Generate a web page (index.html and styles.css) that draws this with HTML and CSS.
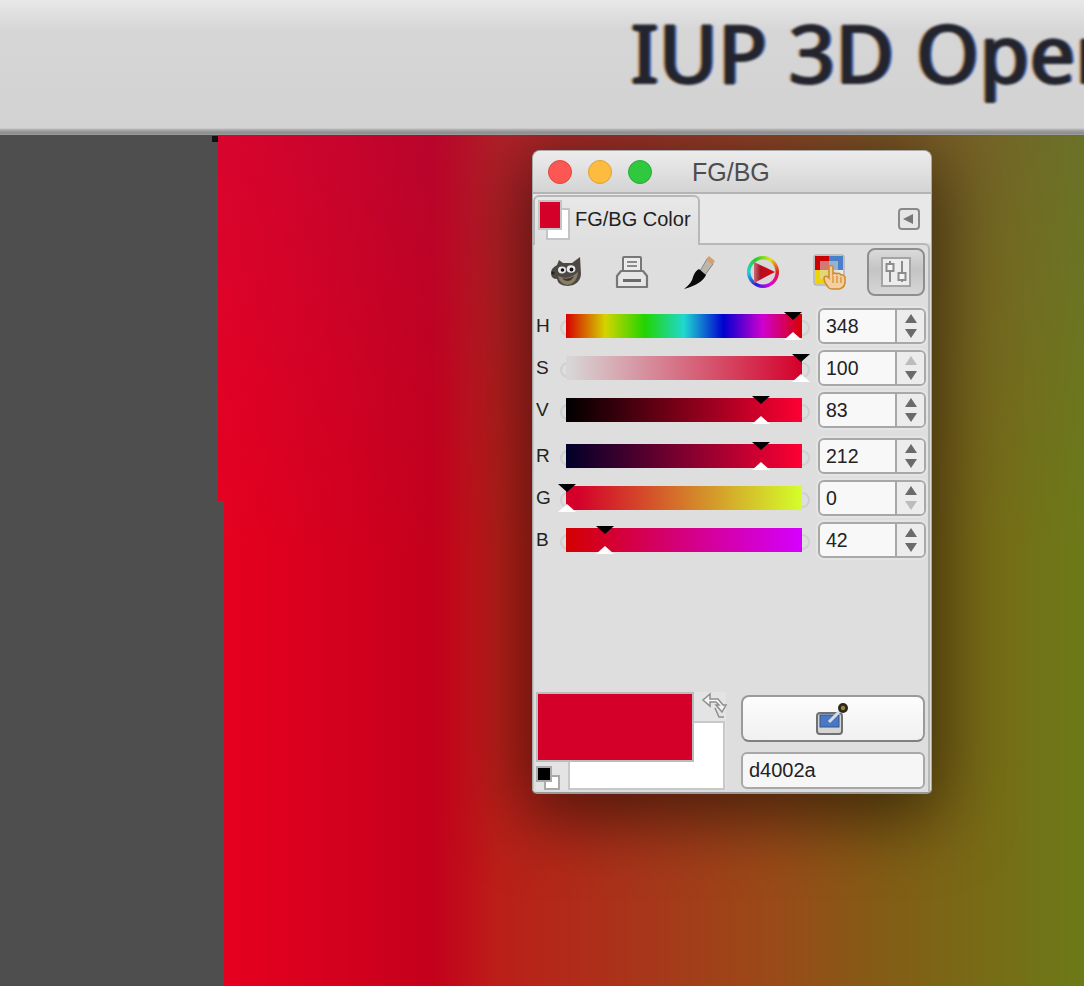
FILE: index.html
```html
<!DOCTYPE html>
<html>
<head>
    <title>IUP 3D OpenGL</title>
    <link rel="stylesheet" href="styles.css">
</head>
<body>
    <div class="topbar">
        <h1 class="app-title">IUP 3D OpenGL</h1>
    </div>

    <div class="workspace">
        <div class="gutter">
            <div class="gutter-top"><span class="corner-dot"></span></div>
            <div class="gutter-bottom"></div>
        </div>

        <div class="window">
            <div class="titlebar">
                <span class="light light-close"></span>
                <span class="light light-min"></span>
                <span class="light light-max"></span>
                <span class="window-title">FG/BG</span>
            </div>

            <div class="tabbar">
                <div class="tab">
                    <span class="tab-swatch"><span class="tab-bg"></span><span class="tab-fg"></span></span>
                    <span class="tab-label">FG/BG Color</span>
                </div>
                <div class="tab-menu">
                    <svg width="22" height="22" viewBox="0 0 22 22">
                        <rect x="1" y="1" width="20" height="20" rx="3" fill="#e6e6e6" stroke="#8a8a8a" stroke-width="2"/>
                        <path d="M5 11 L15 6 V16 Z" fill="#777"/>
                    </svg>
                </div>
            </div>

            <div class="panel">
                <div class="toolbar">
                    <div class="tool">
                        <svg width="36" height="36" viewBox="0 0 36 36">
                            <path d="M9 11 L11 6 L15 9 H24 L32 3 L33 20 Q32 31 20 32 Q10 32 9 25 Q3 25 3 19 Q3 14 9 11 Z" fill="#4c4944"/>
                            <path d="M10 22 Q20 27 30 18 Q29 30 19 31 Q12 30 10 22 Z" fill="#8a7d66"/>
                            <path d="M14 24 Q20 26 26 22 Q24 27 19 27 Q16 27 14 24 Z" fill="#3c3832"/>
                            <ellipse cx="14" cy="16" rx="4" ry="3.4" fill="#e8e8e8"/>
                            <ellipse cx="23" cy="15" rx="4.4" ry="3.8" fill="#e8e8e8"/>
                            <circle cx="14.5" cy="16" r="1.8" fill="#111"/>
                            <circle cx="23.5" cy="15.5" r="1.9" fill="#111"/>
                            <circle cx="5" cy="19" r="1.6" fill="#222"/>
                        </svg>
                    </div>
                    <div class="tool">
                        <svg width="36" height="36" viewBox="0 0 36 36">
                            <rect x="9" y="3" width="18" height="16" rx="1" fill="#ececec" stroke="#777" stroke-width="2"/>
                            <path d="M13 8 H23 M13 12 H23" stroke="#8c8c8c" stroke-width="2"/>
                            <path d="M7 17 H29 L33 22 V33 H3 V22 Z" fill="#e6e6e6" stroke="#777" stroke-width="2.2" stroke-linejoin="round"/>
                            <path d="M9 26.5 H27" stroke="#6a6a6a" stroke-width="3"/>
                        </svg>
                    </div>
                    <div class="tool">
                        <svg width="36" height="36" viewBox="0 0 36 36">
                            <path d="M20 17 L27 5 L33 10 L25 21 Z" fill="#bdb6aa" stroke="#77726a" stroke-width=".8"/>
                            <path d="M26 5 L29 2 L35 7 L33 10 Z" fill="#d8a070"/>
                            <path d="M19 15 L26 21 Q22 30 4 35 Q12 29 13 23 Q15 17 19 15 Z" fill="#0a0a0a"/>
                        </svg>
                    </div>
                    <div class="tool">
                        <div class="wheel">
                            <svg width="26" height="26" viewBox="0 0 26 26">
                                <defs>
                                    <linearGradient id="wheel-fade" x1="0" y1="0" x2="1" y2="0">
                                        <stop offset="0" stop-color="#c07078"/>
                                        <stop offset=".3" stop-color="#b01020"/>
                                        <stop offset="1" stop-color="#e80010"/>
                                    </linearGradient>
                                </defs>
                                <path d="M4 3 L25 13 L4 24 Z" fill="url(#wheel-fade)"/>
                            </svg>
                        </div>
                    </div>
                    <div class="tool">
                        <svg width="36" height="36" viewBox="-2 0 36 36">
                            <rect x="2" y="2" width="14" height="14" fill="#cc0000"/>
                            <rect x="16" y="2" width="14" height="14" fill="#4a80c8"/>
                            <rect x="2" y="16" width="14" height="14" fill="#eed400"/>
                            <rect x="16" y="16" width="14" height="14" fill="#e8e8e8"/>
                            <rect x="7" y="7" width="18" height="18" fill="#d8d8d8" opacity=".55"/>
                            <rect x="1" y="1" width="30" height="30" rx="2" fill="none" stroke="#777" stroke-opacity=".6" stroke-width="1"/>
                            <path d="M15 33 Q11 28 11 24 Q12 21 15 23 L16 24 V13 Q18 10 20 13 V20 Q22 18 24 20 Q26 18 28 21 Q30 20 32 23 V29 Q31 34 26 35 H19 Q16 35 15 33 Z" fill="#f3cf9f" stroke="#d08c2c" stroke-width="1.6"/>
                            <path d="M20 22 V29 M24 22 V29 M28 23 V29" stroke="#d08c2c" stroke-width="1.2"/>
                        </svg>
                    </div>
                    <div class="tool tool-active">
                        <svg width="32" height="32" viewBox="0 0 32 32">
                            <rect x="2" y="2" width="28" height="28" fill="#ececec" stroke="#a4a4a4" stroke-width="2"/>
                            <path d="M10 5 V26 M22 5 V26" stroke="#8c8c8c" stroke-width="2"/>
                            <rect x="6.5" y="8" width="7" height="7" fill="#f4f4f4" stroke="#8c8c8c" stroke-width="2"/>
                            <rect x="18.5" y="17" width="7" height="7" fill="#f4f4f4" stroke="#8c8c8c" stroke-width="2"/>
                        </svg>
                    </div>
                </div>

                <div class="slider-group">
                    <div class="slider-row">
                        <span class="slider-label">H</span>
                        <div class="slider"><div class="bar bar-h"></div><span class="mark" style="left: 96.2%"></span></div>
                        <div class="spin"><span class="spin-value">348</span><span class="spin-arrows"><i class="up"></i><i class="down"></i></span></div>
                    </div>
                    <div class="slider-row">
                        <span class="slider-label">S</span>
                        <div class="slider"><div class="bar bar-s"></div><span class="mark" style="left: 99.6%"></span></div>
                        <div class="spin"><span class="spin-value">100</span><span class="spin-arrows"><i class="up off"></i><i class="down"></i></span></div>
                    </div>
                    <div class="slider-row">
                        <span class="slider-label">V</span>
                        <div class="slider"><div class="bar bar-v"></div><span class="mark" style="left: 82.6%"></span></div>
                        <div class="spin"><span class="spin-value">83</span><span class="spin-arrows"><i class="up"></i><i class="down"></i></span></div>
                    </div>
                </div>

                <div class="slider-group">
                    <div class="slider-row">
                        <span class="slider-label">R</span>
                        <div class="slider"><div class="bar bar-r"></div><span class="mark" style="left: 82.6%"></span></div>
                        <div class="spin"><span class="spin-value">212</span><span class="spin-arrows"><i class="up"></i><i class="down"></i></span></div>
                    </div>
                    <div class="slider-row">
                        <span class="slider-label">G</span>
                        <div class="slider"><div class="bar bar-g"></div><span class="mark" style="left: 0.4%"></span></div>
                        <div class="spin"><span class="spin-value">0</span><span class="spin-arrows"><i class="up"></i><i class="down off"></i></span></div>
                    </div>
                    <div class="slider-row">
                        <span class="slider-label">B</span>
                        <div class="slider"><div class="bar bar-b"></div><span class="mark" style="left: 16.5%"></span></div>
                        <div class="spin"><span class="spin-value">42</span><span class="spin-arrows"><i class="up"></i><i class="down"></i></span></div>
                    </div>
                </div>

                <div class="panel-bottom">
                    <div class="fgbg">
                        <div class="bg-color"></div>
                        <div class="fg-color"></div>
                        <svg class="swap" width="26" height="28" viewBox="0 0 26 28">
                            <path d="M9 2 L2 8 L9 14 V10 H15 L18 13 H15 L21 20 L25 13 H22 L17 7 H9 Z" fill="#f4f4f4" stroke="#8e8e8e" stroke-width="1.5"/>
                            <path d="M14 16 L18 25 H23" fill="none" stroke="#8e8e8e" stroke-width="1.5"/>
                        </svg>
                        <div class="defaults"><span class="default-bg"></span><span class="default-fg"></span></div>
                    </div>
                    <div class="picker">
                        <div class="picker-button">
                            <svg width="36" height="36" viewBox="0 0 36 36">
                                <rect x="2" y="12" width="25" height="21" rx="3" fill="#d4d4d4" stroke="#707070" stroke-width="2"/>
                                <rect x="5" y="14" width="19" height="12" fill="#4a78c4" stroke="#2f568f"/>
                                <path d="M14 21 L26 9" stroke="#d8dde6" stroke-width="3"/>
                                <circle cx="28" cy="7" r="5" fill="#2a2a1c"/>
                                <circle cx="28" cy="7" r="2.2" fill="#a0803c"/>
                            </svg>
                        </div>
                        <div class="hex-entry">d4002a</div>
                    </div>
                </div>
            </div>
        </div>
    </div>
</body>
</html>
```

FILE: styles.css
```css
/* Page */
* {
    box-sizing: border-box;
}

html, body {
    height: 100%;
}

body {
    margin: 0;
    overflow: hidden;
    display: flex;
    flex-direction: column;
    font-family: "Liberation Sans", Arial, sans-serif;
    color: #222;
}

/* Top bar of the main window */
.topbar {
    position: relative;
    z-index: 1;
    height: 135px;
    flex: none;
    padding-left: 631px;
    overflow: hidden;
    background: linear-gradient(#e8e8e8 0, #d6d6d6 30px, #d2d2d2 128px, #a8a8a8 130px, #8c8c8c 133px, #a0a0a0 135px);
}

.app-title {
    margin: 0;
    font-family: "Noto Sans", sans-serif;
    font-size: 80px;
    line-height: 103px;
    font-weight: 400;
    letter-spacing: 0.8px;
    white-space: nowrap;
    color: #24242e;
    -webkit-text-stroke: 2px #24242e;
    text-shadow: -3px 0 #c08a48, 3px 0 #3a6ac0;
    filter: blur(1px);
}

/* Canvas */
.workspace {
    position: relative;
    flex: 1;
    display: flex;
    background:
        linear-gradient(rgba(90, 40, 180, 0.1), rgba(90, 40, 180, 0) 420px),
        linear-gradient(to right, #e6001f 224px, #d4001e 340px, #c4001c 432px, #bb1f18 498px, #a8351a 635px, #9a4a18 772px, #835c15 882px, #6c7a18 1084px);
}

.gutter {
    display: flex;
    flex-direction: column;
}

.gutter-top {
    width: 218px;
    height: 366px;
    flex: none;
    background-color: #4e4e4e;
    display: flex;
    justify-content: flex-end;
    align-items: flex-start;
    padding-top: 1px;
}

.corner-dot {
    width: 6px;
    height: 6px;
    background-color: #111;
}

.gutter-bottom {
    width: 224px;
    flex: 1;
    background-color: #4e4e4e;
}

/* Floating FG/BG window */
.window {
    position: absolute;
    left: 532px;
    top: 15px;
    width: 400px;
    height: 644px;
    display: flex;
    flex-direction: column;
    background-color: #dedede;
    border: 1px solid #a8a8a8;
    border-bottom: 2px solid #999;
    border-radius: 8px 8px 5px 5px;
    box-shadow: 0 16px 70px 8px rgba(0, 0, 0, 0.55);
    overflow: hidden;
}

.titlebar {
    height: 43px;
    flex: none;
    display: flex;
    align-items: center;
    gap: 16px;
    padding-left: 15px;
    background: linear-gradient(#ececec, #d4d4d4);
    border-bottom: 2px solid #b4b4b4;
}

.light {
    width: 24px;
    height: 24px;
    border-radius: 50%;
}

.light-close {
    background-color: #fc5753;
    border: 1px solid #e0443e;
}

.light-min {
    background-color: #fdbc40;
    border: 1px solid #dea034;
}

.light-max {
    background-color: #2fc83f;
    border: 1px solid #27aa35;
}

.window-title {
    margin-left: 24px;
    padding-top: 2px;
    font-size: 25px;
    color: #4d4d4d;
}

/* Tab row */
.tabbar {
    height: 49px;
    flex: none;
    display: flex;
    justify-content: space-between;
    align-items: center;
    background-color: #e8e8e8;
}

.tab {
    width: 167px;
    height: 50px;
    margin-bottom: -2px;
    align-self: flex-end;
    display: flex;
    align-items: flex-start;
    gap: 5px;
    position: relative;
    z-index: 1;
    padding: 3px 0 0 3px;
    background: linear-gradient(#e8e8e8, #dedede);
    border: 2px solid #b8b8b8;
    border-bottom: none;
    border-radius: 6px 6px 0 0;
}

.tab-swatch {
    position: relative;
    width: 32px;
    height: 40px;
    flex: none;
}

.tab-bg {
    position: absolute;
    left: 8px;
    top: 8px;
    width: 24px;
    height: 32px;
    background-color: #fff;
    border: 2px solid #c4c4c4;
}

.tab-fg {
    position: absolute;
    left: 0;
    top: 0;
    width: 24px;
    height: 30px;
    background-color: #d4002a;
    border: 2px solid #c4c4c4;
}

.tab-label {
    font-size: 20px;
    line-height: 38px;
    white-space: nowrap;
}

.tab-menu {
    display: flex;
    margin-right: 11px;
}

/* Main panel */
.panel {
    flex: 1;
    display: flex;
    flex-direction: column;
    gap: 10px;
    margin-right: 1px;
    padding: 3px 3px 2px 3px;
    background-color: #dedede;
    border-top: 2px solid #b8b8b8;
    border-right: 2px solid #b8b8b8;
    border-left: 1px solid #c8c8c8;
    border-radius: 0 6px 0 0;
}

.toolbar {
    display: flex;
    gap: 8px;
    margin-bottom: 2px;
}

.tool {
    width: 58px;
    height: 48px;
    display: flex;
    justify-content: center;
    align-items: center;
}

.tool svg,
.wheel {
    filter: blur(0.4px);
}

.wheel svg {
    filter: none;
}

.tool-active {
    margin-left: 1px;
    border: 2px solid #8e8e8e;
    border-radius: 8px;
    background: linear-gradient(#dadada, #c4c4c4 45%, #d6d6d6);
}

.wheel {
    width: 32px;
    height: 32px;
    border-radius: 50%;
    display: flex;
    align-items: center;
    justify-content: center;
    background: radial-gradient(circle, #d8d8d8 0 12px, transparent 13px), conic-gradient(from 90deg, #e02020, #e000e0, #2020e0, #20d0e0, #20d020, #e0e020, #e02020);
}

/* Sliders */
.slider-group {
    display: flex;
    flex-direction: column;
    gap: 6px;
}

.slider-row {
    height: 36px;
    display: flex;
    align-items: center;
}

.slider-label {
    width: 29px;
    flex: none;
    margin-left: -1px;
    margin-right: 1px;
    font-size: 19px;
}

.slider {
    position: relative;
    width: 236px;
    height: 24px;
    flex: none;
    margin-right: 16px;
}

/* Round ends of the track, poking out from under the bar */
.slider::before,
.slider::after {
    content: "";
    position: absolute;
    top: 6px;
    width: 12px;
    height: 12px;
    border: 2px solid #cfcfcf;
    border-radius: 50%;
}

.slider::before {
    left: -6px;
}

.slider::after {
    right: -8px;
}

.bar {
    position: relative;
    z-index: 1;
    height: 24px;
}

.bar-h {
    background: linear-gradient(to right, #d80000, #d4d400 16.7%, #22d400 33.3%, #20d8d0 50%, #0000d0 66.7%, #d000d0 83.3%, #d80000);
}

.bar-s {
    background: linear-gradient(to right, #d8d8d8, #d4002a);
}

.bar-v {
    background: linear-gradient(to right, #000, #ff0033);
}

.bar-r {
    background: linear-gradient(to right, #00002a, #ff0033);
}

.bar-g {
    background: linear-gradient(to right, #d4002a 5%, #d4ff2a);
}

.bar-b {
    background: linear-gradient(to right, #d40000, #d400ff);
}

/* Black and white triangles over the bar */
.mark {
    position: absolute;
    z-index: 2;
    top: -2px;
    bottom: -2px;
    width: 0;
}

.mark::before,
.mark::after {
    content: "";
    position: absolute;
    left: -9px;
    border-left: 9px solid transparent;
    border-right: 9px solid transparent;
}

.mark::before {
    top: 0;
    border-top: 8px solid #000;
}

.mark::after {
    bottom: 0;
    border-bottom: 8px solid #fff;
}

/* Spin boxes */
.spin {
    width: 108px;
    height: 36px;
    flex: none;
    display: flex;
    background-color: #f8f8f8;
    border: 2px solid #a8a8a8;
    border-radius: 6px;
    box-shadow: 0 0 0 2px #e4e4e4;
}

.spin-value {
    flex: 1;
    padding-left: 6px;
    font-size: 19.5px;
    line-height: 32px;
}

.spin-arrows {
    width: 29px;
    flex: none;
    display: flex;
    flex-direction: column;
    justify-content: center;
    align-items: center;
    gap: 6px;
    border-left: 2px solid #a8a8a8;
    background-color: #ececec;
    border-radius: 0 4px 4px 0;
}

.spin-arrows i {
    width: 0;
    border-left: 6px solid transparent;
    border-right: 6px solid transparent;
}

.up {
    border-bottom: 9px solid #6a6a6a;
}

.down {
    border-top: 9px solid #6a6a6a;
}

.up.off {
    border-bottom-color: #bcbcbc;
}

.down.off {
    border-top-color: #bcbcbc;
}

/* Bottom area */
.panel-bottom {
    flex: 1;
    display: flex;
    align-items: flex-end;
    gap: 15px;
    margin-left: -1px;
}

.fgbg {
    position: relative;
    width: 190px;
    height: 98px;
    flex: none;
    background-color: #e4e4e4;
}

.bg-color {
    position: absolute;
    left: 32px;
    top: 29px;
    right: 1px;
    bottom: 0;
    background-color: #fff;
    border: 2px solid #c8c8c8;
}

.fg-color {
    position: absolute;
    left: 0;
    top: 0;
    width: 158px;
    height: 70px;
    background-color: #d4002a;
    border: 2px solid #bcbcbc;
}

.swap {
    position: absolute;
    right: -1px;
    top: 0;
}

.defaults {
    position: absolute;
    left: 0;
    bottom: 0;
    width: 24px;
    height: 24px;
}

.default-bg {
    position: absolute;
    right: 0;
    bottom: 0;
    width: 16px;
    height: 15px;
    background-color: #fff;
    border: 2px solid #aaa;
}

.default-fg {
    position: absolute;
    left: 0;
    top: 0;
    width: 16px;
    height: 16px;
    background-color: #000;
    border: 2px solid #aaa;
}

.picker {
    flex: 1;
    display: flex;
    flex-direction: column;
    gap: 10px;
    margin-bottom: 1px;
}

.picker-button {
    height: 47px;
    display: flex;
    justify-content: center;
    align-items: center;
    background: linear-gradient(#fdfdfd, #f0f0f0);
    border: 2px solid #9a9a9a;
    border-bottom-color: #808080;
    border-radius: 8px;
}

.hex-entry {
    height: 37px;
    padding-left: 6px;
    font-size: 20px;
    line-height: 33px;
    background-color: #f6f6f6;
    border: 2px solid #a8a8a8;
    border-radius: 6px;
}
```
